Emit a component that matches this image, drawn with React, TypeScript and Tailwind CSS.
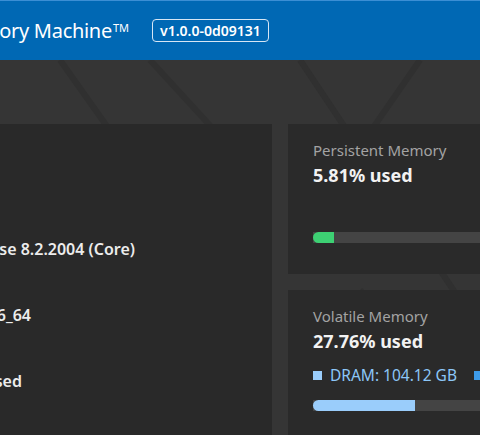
import React from 'react';

const font = { fontFamily: '"Noto Sans", "Open Sans", sans-serif' };

function UsageBar({ percent, color }: { percent: number; color: string }) {
  return (
    <div className="h-[11px] w-full bg-[#444444]">
      <div className={`h-full rounded-l-full ${color}`} style={{ width: `${percent}%` }} />
    </div>
  );
}

function InfoRow({ value, end }: { value: string; end: string }) {
  // value is right-anchored; the start of the line runs off the visible area
  return (
    <div className={`flex h-[66px] items-center justify-end whitespace-nowrap ${end}`}>
      <span className="text-[16px] font-semibold text-[#ececec]">{value}</span>
    </div>
  );
}

export default function App() {
  return (
    <div
      className="relative h-[435px] w-[480px] overflow-hidden bg-[#353535]"
      style={font}
    >
      {/* faint diagonal pattern behind the panels */}
      <svg className="pointer-events-none absolute inset-0 h-full w-full" viewBox="0 0 480 435">
        <g stroke="#2e2e2e" strokeWidth="6" fill="none" opacity="0.7">
          <path d="M60 60 L230 300" />
          <path d="M150 60 L260 180" />
          <path d="M300 60 L480 330" />
          <path d="M420 60 L330 190" />
          <path d="M360 290 L480 420" />
        </g>
      </svg>

      <header className="relative flex h-[60px] items-center border-t border-[#3b8ed4] bg-[#0068b4] text-white">
        <div className="flex w-[129px] justify-end whitespace-nowrap">
          <span className="text-[20px] font-normal tracking-[-0.3px]">
            Memory Machine<sup className="ml-[1px] text-[11px] font-normal tracking-normal">TM</sup>
          </span>
        </div>
        <span className="ml-[23px] rounded-[4px] border border-[#d6e6f5] px-[7px] py-[1px] text-[14px] font-semibold leading-[19px]">
          v1.0.0-0d09131
        </span>
      </header>

      <div className="h-[64px]" />

      <main className="relative flex gap-4">
        <section className="h-[320px] w-[272px] shrink-0 bg-[#292929]/95 pt-[92px]">
          <InfoRow value="CentOS Linux release 8.2.2004 (Core)" end="w-[135px]" />
          <InfoRow value="x86_64" end="w-[31px]" />
          <InfoRow value="12.40% used" end="w-[22px]" />
        </section>

        <div className="flex w-[300px] shrink-0 flex-col gap-4">
          <section className="h-[150px] bg-[#2a2a2a]/95 pl-[25px] pt-[16px]">
            <div className="text-[15px] leading-[20px] text-[#a3a3a3]">Persistent Memory</div>
            <div className="mt-[3px] text-[18px] font-bold leading-[24px] text-[#f2f2f2]">5.81% used</div>
            <div className="mt-[45px]">
              <UsageBar percent={7.6} color="bg-[#3dd073]" />
            </div>
          </section>

          <section className="h-[160px] bg-[#2a2a2a]/95 pl-[25px] pt-[16px]">
            <div className="text-[15px] leading-[20px] text-[#a3a3a3]">Volatile Memory</div>
            <div className="mt-[3px] text-[18px] font-bold leading-[24px] text-[#f2f2f2]">27.76% used</div>
            <div className="mt-[12px] flex items-center gap-[8px] whitespace-nowrap text-[15.5px] leading-[20px] text-[#8cc6f7]">
              <span className="h-[9px] w-[9px] bg-[#9acdfb]" />
              <span>DRAM: 104.12 GB</span>
              <span className="ml-[9px] h-[9px] w-[9px] bg-[#3d9be9]" />
              <span>PMem: 0 GB</span>
            </div>
            <div className="mt-[15px]">
              <UsageBar percent={37} color="bg-[#9acdfb]" />
            </div>
          </section>
        </div>
      </main>
    </div>
  );
}
